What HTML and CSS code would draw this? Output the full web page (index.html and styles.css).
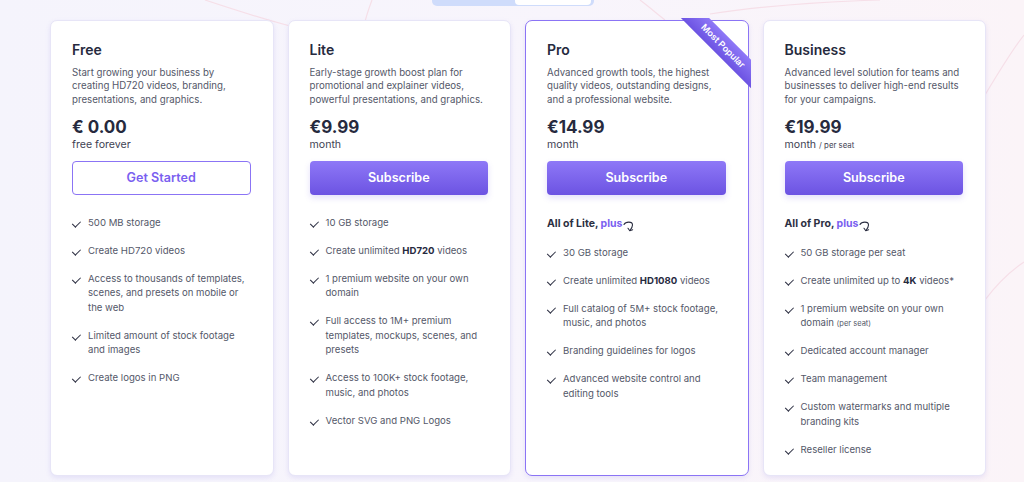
FILE: index.html
```html
<!DOCTYPE html>
<html lang="en">

<head>
    <meta charset="UTF-8">
    <meta name="viewport" content="width=device-width, initial-scale=1.0">
    <title>Pricing</title>
    <link rel="stylesheet" href="styles.css">
</head>

<body>

    <!-- faint decorative curves behind the cards -->
    <svg class="bg-lines" width="1024" height="482" viewBox="0 0 1024 482">
        <path d="M205 0 C 235 10, 260 18, 290 26" />
        <path d="M372 0 C 369 8, 366 16, 364 26" />
        <path d="M640 0 C 648 6, 655 12, 665 20" />
        <path d="M710 14 C 760 6, 820 2, 880 0" />
        <path d="M985 95 C 1000 70, 1012 50, 1024 35" />
        <path d="M985 300 C 1000 280, 1012 270, 1024 262" />
    </svg>

    <div class="switch">
        <span class="switch-on"></span>
        <span class="switch-off"></span>
    </div>

    <div class="plans">

        <div class="card">
            <h3>Free</h3>
            <p class="desc">Start growing your business by creating HD720 videos, branding, presentations, and graphics.</p>
            <div class="price">€ 0.00</div>
            <div class="period">free forever</div>
            <a class="btn btn-outline" href="#">Get Started</a>
            <ul class="features">
                <li>500 MB storage</li>
                <li>Create HD720 videos</li>
                <li>Access to thousands of templates, scenes, and presets on mobile or the web</li>
                <li>Limited amount of stock footage and images</li>
                <li>Create logos in PNG</li>
            </ul>
        </div>

        <div class="card">
            <h3>Lite</h3>
            <p class="desc">Early-stage growth boost plan for promotional and explainer videos, powerful presentations, and graphics.</p>
            <div class="price">€9.99</div>
            <div class="period">month</div>
            <a class="btn" href="#">Subscribe</a>
            <ul class="features">
                <li>10 GB storage</li>
                <li>Create unlimited <b>HD720</b> videos</li>
                <li>1 premium website on your own domain</li>
                <li>Full access to 1M+ premium templates, mockups, scenes, and presets</li>
                <li>Access to 100K+ stock footage, music, and photos</li>
                <li>Vector SVG and PNG Logos</li>
            </ul>
        </div>

        <div class="card card-popular">
            <div class="ribbon-box">
                <div class="ribbon">Most Popular</div>
            </div>
            <h3>Pro</h3>
            <p class="desc">Advanced growth tools, the highest quality videos, outstanding designs, and a professional website.</p>
            <div class="price">€14.99</div>
            <div class="period">month</div>
            <a class="btn" href="#">Subscribe</a>
            <div class="includes">All of Lite, <span>plus</span>
                <svg class="curl" width="12" height="12" viewBox="0 0 12 12">
                    <path d="M1 4.5 C 2.5 1.5, 9.5 1, 9.5 5 C 9.5 7, 8.5 8.5, 7 10.5" />
                    <path d="M5 8.3 L 6.8 10.8 L 9.6 9.8" />
                </svg>
            </div>
            <ul class="features">
                <li>30 GB storage</li>
                <li>Create unlimited <b>HD1080</b> videos</li>
                <li>Full catalog of 5M+ stock footage, music, and photos</li>
                <li>Branding guidelines for logos</li>
                <li>Advanced website control and editing tools</li>
            </ul>
        </div>

        <div class="card">
            <h3>Business</h3>
            <p class="desc">Advanced level solution for teams and businesses to deliver high-end results for your campaigns.</p>
            <div class="price">€19.99</div>
            <div class="period">month <small>/ per seat</small></div>
            <a class="btn" href="#">Subscribe</a>
            <div class="includes">All of Pro, <span>plus</span>
                <svg class="curl" width="12" height="12" viewBox="0 0 12 12">
                    <path d="M1 4.5 C 2.5 1.5, 9.5 1, 9.5 5 C 9.5 7, 8.5 8.5, 7 10.5" />
                    <path d="M5 8.3 L 6.8 10.8 L 9.6 9.8" />
                </svg>
            </div>
            <ul class="features">
                <li>50 GB storage per seat</li>
                <li>Create unlimited up to <b>4K</b> videos*</li>
                <li>1 premium website on your own domain <small>(per seat)</small></li>
                <li>Dedicated account manager</li>
                <li>Team management</li>
                <li>Custom watermarks and multiple branding kits</li>
                <li>Reseller license</li>
            </ul>
        </div>

    </div>

</body>

</html>
```

FILE: styles.css
```css
body {
    margin: 0;
    height: 482px;
    overflow: hidden;
    font-family: Inter, 'Noto Sans', sans-serif;
    color: #545869;
    background: linear-gradient(90deg, #f5f4fc 0%, #f8f5fc 55%, #fbf4f8 100%);
    position: relative;
}

.bg-lines {
    position: absolute;
    top: 0;
    left: 0;
    z-index: 0;
}

.bg-lines path {
    fill: none;
    stroke: #f6dfe8;
    stroke-width: 1.2;
}

/* half-hidden toggle at the top */
.switch {
    position: relative;
    z-index: 1;
    display: flex;
    width: 162px;
    height: 6px;
    margin: 0 0 14px 432px;
    background-color: #cfdcfb;
    border-radius: 0 0 5px 5px;
}

.switch-on {
    width: 83px;
}

.switch-off {
    width: 76px;
    margin-bottom: 1px;
    background-color: #fff;
    border-radius: 0 0 4px 4px;
}

.plans {
    position: relative;
    z-index: 1;
    display: grid;
    grid-template-columns: repeat(4, 1fr);
    gap: 14px;
    width: 936px;
    margin-left: 50px;
}

.card {
    position: relative;
    height: 456px;
    box-sizing: border-box;
    padding: 20px 22px 0 21px;
    background-color: #fff;
    border: 1px solid #e7e5f7;
    border-radius: 7px;
    box-shadow: 0 2px 5px rgba(120, 105, 220, 0.14);
}

.card-popular {
    border: 1.5px solid #8b74f5;
}

h3 {
    margin: 0;
    font-size: 14px;
    line-height: 18px;
    font-weight: 600;
    color: #262a3e;
}

.desc {
    margin: 7px 0 0;
    font-size: 9.7px;
    line-height: 13.3px;
}

.price {
    margin-top: 10px;
    font-size: 17px;
    line-height: 22px;
    font-weight: 700;
    color: #262a3e;
}

.period {
    height: 13px;
    font-size: 10.6px;
    line-height: 13px;
    color: #3f4354;
}

.period small {
    font-size: 7.8px;
    line-height: 1;
}

.btn {
    display: block;
    margin-top: 10px;
    height: 34px;
    line-height: 34px;
    text-align: center;
    font-size: 12.6px;
    font-weight: 600;
    color: #fff;
    text-decoration: none;
    border-radius: 4px;
    background: linear-gradient(180deg, #8e78f7 0%, #6c53e2 100%);
    box-shadow: 0 3px 6px rgba(108, 83, 226, 0.18);
}

.btn-outline {
    box-sizing: border-box;
    line-height: 31px;
    color: #7a5ff0;
    background: #fff;
    border: 1.5px solid #8b74f5;
    box-shadow: none;
}

.includes {
    height: 14px;
    margin-top: 22px;
    font-size: 10.5px;
    line-height: 14px;
    font-weight: 700;
    color: #2c2f42;
}

.includes span {
    color: #7a5ff0;
}

.curl {
    vertical-align: -5px;
    margin-left: -2px;
}

.curl path {
    fill: none;
    stroke: #2c2f42;
    stroke-width: 1.1;
    stroke-linecap: round;
    stroke-linejoin: round;
}

.features {
    list-style: none;
    margin: 21px 0 0;
    padding: 0;
}

.includes + .features {
    margin-top: 15px;
}

.features li {
    position: relative;
    padding-left: 16px;
    margin-bottom: 13.5px;
    font-size: 9.6px;
    line-height: 14.5px;
}

.features li::before {
    content: '';
    position: absolute;
    left: 2px;
    top: 3px;
    width: 3.5px;
    height: 7px;
    border-right: 1.5px solid #2c2f42;
    border-bottom: 1.5px solid #2c2f42;
    transform: rotate(45deg);
}

.features b {
    color: #262a3e;
}

.features small {
    font-size: 7.5px;
    line-height: 1;
}

/* corner ribbon on the popular plan */
.ribbon-box {
    position: absolute;
    top: -3px;
    right: -3px;
    width: 75px;
    height: 75px;
    overflow: hidden;
}

.ribbon {
    position: absolute;
    left: -13px;
    top: 18px;
    width: 120px;
    height: 20px;
    line-height: 20px;
    text-align: center;
    font-size: 9px;
    font-weight: 600;
    color: #fff;
    background: linear-gradient(180deg, #8e78f7 0%, #6c53e2 100%);
    transform: rotate(45deg);
}
```
